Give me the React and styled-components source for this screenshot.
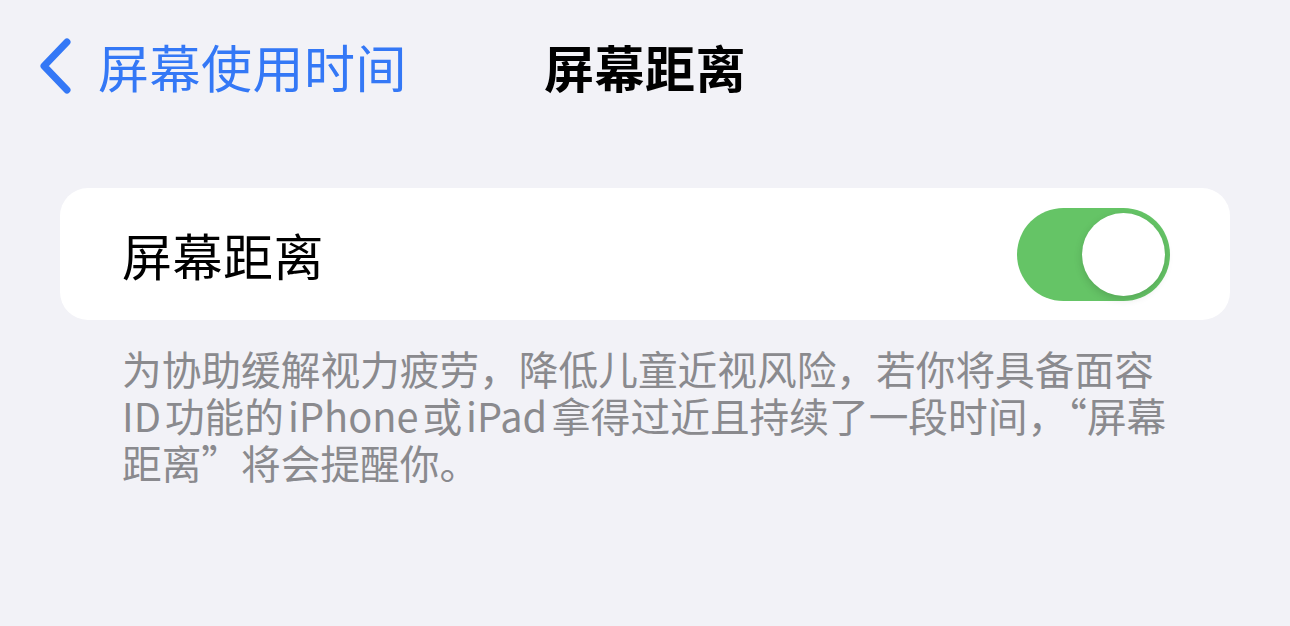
import React from "react";
import styled, { createGlobalStyle } from "styled-components";

const GlobalStyle = createGlobalStyle`
  html, body {
    margin: 0;
    padding: 0;
    background: #f2f2f7;
    font-family: "Noto Sans CJK SC", "Noto Sans", sans-serif;
  }
`;

const Page = styled.div`
  width: 1290px;
  height: 626px;
  background: #f2f2f7;
  box-sizing: border-box;
  padding: 0 60px;
  display: flex;
  flex-direction: column;
`;

const NavBar = styled.div`
  position: relative;
  height: 140px;
  display: flex;
  align-items: center;
  justify-content: center;
  margin-top: -4px;
`;

const BackButton = styled.div`
  position: absolute;
  left: -22px;
  top: 0;
  height: 140px;
  display: flex;
  align-items: center;
  gap: 26px;
  color: #3478f6;
  font-size: 51px;
  letter-spacing: 0.5px;
`;

const Title = styled.div`
  font-size: 50px;
  font-weight: 700;
  color: #000;
  letter-spacing: 0.5px;
`;

const Card = styled.div`
  margin-top: 52px;
  height: 132px;
  background: #fff;
  border-radius: 28px;
  display: flex;
  align-items: center;
  justify-content: space-between;
  padding: 0 60px 0 62px;
`;

const Label = styled.div`
  font-size: 50px;
  color: #000;
  letter-spacing: 0.5px;
`;

const Toggle = styled.div`
  width: 153px;
  height: 93px;
  border-radius: 47px;
  background: #65c466;
  display: flex;
  align-items: center;
  justify-content: ${(p) => (p.$on ? "flex-end" : "flex-start")};
  padding: 0 5px;
  box-sizing: border-box;
`;

const Knob = styled.div`
  width: 83px;
  height: 83px;
  border-radius: 50%;
  background: #fff;
  box-shadow: 0 3px 8px rgba(0, 0, 0, 0.15);
`;

const Footer = styled.div`
  margin-top: 24px;
  padding-left: 62px;
  font-size: 39.7px;
  color: #8a8a8e;
`;

const Line = styled.div`
  height: 47px;
  line-height: 47px;
  white-space: nowrap;
`;

const Latin = styled.span`
  display: inline-block;
  line-height: 47px;
  height: 47px;
  vertical-align: top;
  margin: ${(p) => (p.$first ? "0 4px 0 0" : "0 4px")};
`;

function Chevron() {
  return (
    <svg width="34" height="56" viewBox="0 0 34 56">
      <path
        d="M29 4 L6 28 L29 52"
        fill="none"
        stroke="#3478f6"
        strokeWidth="7"
        strokeLinecap="round"
        strokeLinejoin="round"
      />
    </svg>
  );
}

export default function App() {
  return (
    <Page>
      <GlobalStyle />
      <NavBar>
        <BackButton>
          <Chevron />
          屏幕使用时间
        </BackButton>
        <Title>屏幕距离</Title>
      </NavBar>
      <Card>
        <Label>屏幕距离</Label>
        <Toggle $on>
          <Knob />
        </Toggle>
      </Card>
      <Footer>
        <Line>为协助缓解视力疲劳，降低儿童近视风险，若你将具备面容</Line>
        <Line>
          <Latin $first>ID</Latin>功能的<Latin>iPhone</Latin>或<Latin>iPad</Latin>拿得过近且持续了一段时间，“屏幕
        </Line>
        <Line>距离”将会提醒你。</Line>
      </Footer>
    </Page>
  );
}
